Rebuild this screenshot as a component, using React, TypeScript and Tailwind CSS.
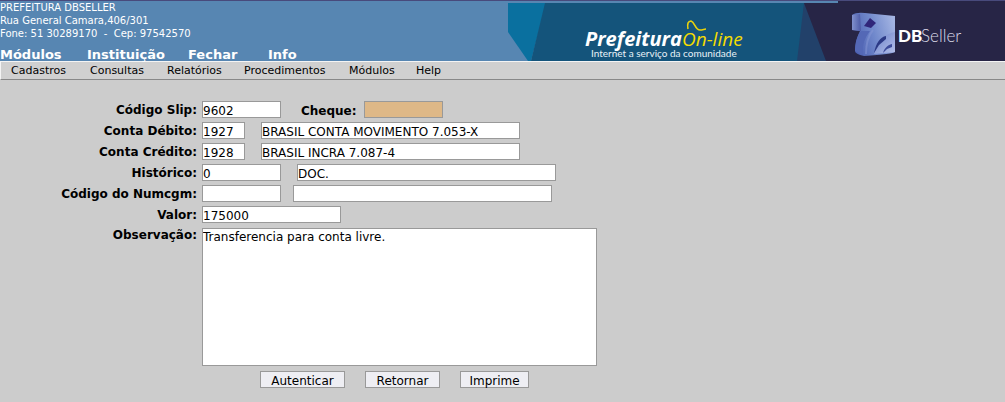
import React from "react";

const topLinks = [
  { label: "Módulos", width: "w-[87px]" },
  { label: "Instituição", width: "w-[101px]" },
  { label: "Fechar", width: "w-[80px]" },
  { label: "Info", width: "w-auto" },
];

const menuItems = [
  { label: "Cadastros", width: "w-[79px]" },
  { label: "Consultas", width: "w-[77px]" },
  { label: "Relatórios", width: "w-[77px]" },
  { label: "Procedimentos", width: "w-[105px]" },
  { label: "Módulos", width: "w-[67px]" },
  { label: "Help", width: "w-auto" },
];

const actions = [
  { label: "Autenticar", width: "w-[85px]" },
  { label: "Retornar", width: "w-[75px]" },
  { label: "Imprime", width: "w-[69px]" },
];

const fieldClass =
  "block h-[17px] min-w-0 rounded-none border border-[#999999] px-0 pt-0.5 text-black outline-none focus:border-[#5786b2]";

function Field({
  id,
  label,
  value = "",
  className,
}: {
  id: string;
  label?: string;
  value?: string;
  className: string;
}) {
  return (
    <input
      id={id}
      name={id}
      type="text"
      aria-label={label}
      defaultValue={value}
      className={`${fieldClass} ${className}`}
    />
  );
}

function Row({ id, label, children }: { id: string; label: string; children: React.ReactNode }) {
  return (
    <div className="flex h-[21px] items-start gap-[5px]">
      <label htmlFor={id} className="w-[197px] shrink-0 text-right font-bold leading-[18px]">
        {label}
      </label>
      {children}
    </div>
  );
}

function Banner() {
  return (
    <svg
      width="497"
      height="60"
      viewBox="508 1 497 60"
      role="img"
      aria-label="Prefeitura On-line, Internet a serviço da comunidade. DBSeller"
      className="shrink-0"
    >
      <defs>
        <linearGradient id="cubeFront" x1="0" y1="0.6" x2="1" y2="0.3">
          <stop offset="0" stopColor="#4a5eb0" />
          <stop offset="0.5" stopColor="#7189cc" />
          <stop offset="1" stopColor="#a3b4e2" />
        </linearGradient>
        <linearGradient id="cubeFoot" x1="0" y1="0" x2="1" y2="1">
          <stop offset="0" stopColor="#6a80c8" />
          <stop offset="1" stopColor="#b4c0ea" />
        </linearGradient>
        <linearGradient id="cubeSide" x1="0" y1="0" x2="1" y2="0">
          <stop offset="0" stopColor="#8191cd" />
          <stop offset="1" stopColor="#4c5aa6" />
        </linearGradient>
      </defs>
      <path d="M508 3H546L531 61H528L508 32Z" fill="#0a709f" />
      <path d="M545 3H806V61H531Z" fill="#14547b" />
      <path d="M804 3H838V61H797Z" fill="#22416a" />
      <path d="M804 3H838V1H1005V61H826Z" fill="#272546" />

      <text x="585" y="46" fontSize="20" fontWeight="700" fontStyle="italic" fill="#ffffff" className="font-['Open_Sans',sans-serif]">
        Prefeitura
      </text>
      <text x="682" y="46" fontSize="19" fontWeight="400" fontStyle="italic" fill="#f5dc00" className="font-['Open_Sans',sans-serif]">
        On-line
      </text>
      <path d="M688 29C687 24 688 21 691 21C695 22 695 30 700 30C703 30 704 29 706 29" fill="none" stroke="#e9d20c" strokeWidth="1.6" />
      <text x="591" y="57" fontSize="10" fill="#e8f2f7" className="font-[Lato,sans-serif]">
        Internet a serviço da comunidade
      </text>

      <path d="M852 15Q856 12 865 13L895 16L895 52Q893 54 864 56Q855 54 855 51Q856 38 860 31L852 30Z" fill="url(#cubeFront)" />
      <path d="M852 15L860 14L861 31L852 30Z" fill="url(#cubeSide)" />
      <path d="M861 31C856 38 855 44 855 51L863 55C862 46 864 39 870 31Z" fill="#5468b6" />
      <path d="M895 32C886 34 880 38 877 46L874 54L895 52Z" fill="url(#cubeFoot)" />
      <path d="M870 18L876 23L871 28L864 26Z" fill="#30267a" />
      <path d="M886 36C880 37 876 43 874 53L879 45L886 39Z" fill="#2c3a86" />
      <path d="M892 44C887 45 884 49 883 53L887 49L892 47Z" fill="#3c4b9a" />
      <path d="M873 30C868 36 866 44 866 54" fill="none" stroke="#8798d6" strokeWidth="2" opacity="0.5" />

      <text x="898" y="42" fontSize="17" fontWeight="900" fill="#ffffff" className="font-[Lato,sans-serif]">
        DB
      </text>
      <text x="921" y="42" fontSize="17" fontWeight="300" fill="#dcdbe8" className="font-[Lato,sans-serif]">
        Seller
      </text>
    </svg>
  );
}

export default function App() {
  return (
    <div className="min-h-screen bg-[#cccccc] font-['DejaVu_Sans',sans-serif] text-[12px] text-black">
      <header className="flex justify-between border-t border-[#484a7c] bg-[#5786b2] text-white">
        <div className="flex h-[60px] min-w-0 flex-col justify-between">
          <address className="text-[10px] leading-[13px] whitespace-pre not-italic">
            <div>PREFEITURA DBSELLER</div>
            <div>Rua General Camara,406/301</div>
            <div>{"Fone: 51 30289170  -  Cep: 97542570"}</div>
          </address>
          <nav aria-label="Principal" className="flex text-[13px] font-bold leading-[13px]">
            {topLinks.map((link) => (
              <a key={link.label} href="#" className={`${link.width} shrink-0`}>
                {link.label}
              </a>
            ))}
          </nav>
        </div>
        <Banner />
      </header>

      <nav
        aria-label="Menu"
        className="flex h-[19px] border-t border-b border-l border-t-[#f4f4f4] border-b-[#888888] border-l-[#f4f4f4] bg-[#d0d0d0] px-2.5 text-[11px] leading-[17px]"
      >
        {menuItems.map((item) => (
          <a key={item.label} href="#" className={`${item.width} shrink-0`}>
            {item.label}
          </a>
        ))}
      </nav>

      <form className="pt-[21px]" onSubmit={(event) => event.preventDefault()}>
        <Row id="slip" label="Código Slip:">
          <Field id="slip" value="9602" className="w-[79px] bg-white" />
          <label htmlFor="cheque" className="ml-[15px] w-[58px] font-bold leading-[20px]">
            Cheque:
          </label>
          <Field id="cheque" className="w-[79px] bg-[#deb887]" />
        </Row>
        <Row id="debito" label="Conta Débito:">
          <Field id="debito" value="1927" className="w-[43px] bg-white" />
          <Field
            id="debitoNome"
            label="Descrição da conta débito"
            value="BRASIL CONTA MOVIMENTO 7.053-X"
            className="ml-[11px] w-[259px] bg-white"
          />
        </Row>
        <Row id="credito" label="Conta Crédito:">
          <Field id="credito" value="1928" className="w-[43px] bg-white" />
          <Field
            id="creditoNome"
            label="Descrição da conta crédito"
            value="BRASIL INCRA 7.087-4"
            className="ml-[11px] w-[259px] bg-white"
          />
        </Row>
        <Row id="historico" label="Histórico:">
          <Field id="historico" value="0" className="w-[79px] bg-white" />
          <Field
            id="historicoNome"
            label="Descrição do histórico"
            value="DOC."
            className="ml-[11px] w-[259px] bg-white"
          />
        </Row>
        <Row id="numcgm" label="Código do Numcgm:">
          <Field id="numcgm" className="w-[79px] bg-white" />
          <Field id="numcgmNome" label="Nome do Numcgm" className="ml-[7px] w-[259px] bg-white" />
        </Row>
        <Row id="valor" label="Valor:">
          <Field id="valor" value="175000" className="w-[139px] bg-white" />
        </Row>
        <div className="flex items-start gap-[5px] pt-px">
          <label htmlFor="observacao" className="w-[197px] shrink-0 text-right font-bold leading-[14px]">
            Observação:
          </label>
          <textarea
            id="observacao"
            name="observacao"
            defaultValue="Transferencia para conta livre."
            className="block h-[138px] w-[395px] min-w-0 resize-none rounded-none border border-[#999999] bg-white px-0 py-px leading-[14px] outline-none"
          />
        </div>
        <div className="mt-[5px] flex gap-5 pl-[260px]">
          {actions.map((action) => (
            <button
              key={action.label}
              type="button"
              className={`${action.width} h-[17px] border border-[#999999] bg-[#eeeef3] pt-0.5 leading-[14px]`}
            >
              {action.label}
            </button>
          ))}
        </div>
      </form>
    </div>
  );
}
